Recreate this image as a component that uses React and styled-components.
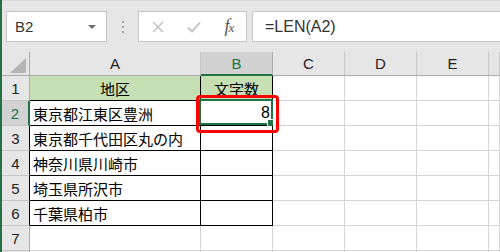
import React from 'react';
import styled, { createGlobalStyle } from 'styled-components';

const GlobalStyle = createGlobalStyle`
  html, body {
    margin: 0;
    padding: 0;
  }
  body {
    width: 500px;
    height: 252px;
    overflow: hidden;
    background: #ffffff;
    font-family: "Liberation Sans", "Noto Sans CJK JP", sans-serif;
  }
`;

const Window = styled.div`
  width: 500px;
  height: 252px;
  box-sizing: border-box;
  border-left: 2px solid #217346;
  display: flex;
  flex-direction: column;
  overflow: hidden;
  background: #ffffff;
`;

const FormulaBar = styled.div`
  flex: none;
  height: 52px;
  box-sizing: border-box;
  background: #e6e6e6;
  border-top: 1px solid #d9d9d9;
  display: flex;
  align-items: flex-start;
  padding: 10px 0 0 4px;
`;

const Box = styled.div`
  height: 31px;
  box-sizing: border-box;
  background: #ffffff;
  border: 1px solid #c6c6c6;
  display: flex;
  align-items: center;
  color: #333333;
  font-size: 15px;
`;

const NameBox = styled(Box)`
  width: 101px;
  padding: 0 8px;
  justify-content: space-between;
`;

const DropArrow = styled.span`
  width: 0;
  height: 0;
  border-left: 4px solid transparent;
  border-right: 4px solid transparent;
  border-top: 4px solid #6b6b6b;
  margin-right: 2px;
`;

const Grip = styled.div`
  width: 31px;
  height: 31px;
  display: flex;
  flex-direction: column;
  align-items: center;
  justify-content: center;
  gap: 3px;
`;

const GripDot = styled.span`
  width: 2px;
  height: 2px;
  background: #a6a6a6;
`;

const ButtonBox = styled(Box)`
  width: 109px;
  display: grid;
  grid-template-columns: 37px 36px 34px;
  justify-items: center;
`;

const FxLabel = styled.span`
  font-family: "Liberation Serif", serif;
  font-style: italic;
  font-size: 18px;
  color: #555555;
  letter-spacing: -1px;
  & small {
    font-size: 13px;
  }
`;

const FormulaInput = styled(Box)`
  flex: 1;
  margin-left: 5px;
  margin-right: -2px;
  padding-left: 12px;
  font-size: 16px;
  color: #333333;
`;

const Sheet = styled.div`
  display: grid;
  grid-template-columns: 28px 171px 72px 72px 72px 72px 1fr;
  grid-template-rows: 24px repeat(8, 25px);
`;

const Corner = styled.div`
  background: #e6e6e6;
  border-right: 1px solid #ababab;
  border-bottom: 1px solid #ababab;
`;

const ColHead = styled.div`
  box-sizing: border-box;
  background: ${p => (p.$active ? '#d2d2d2' : '#e6e6e6')};
  color: ${p => (p.$active ? '#217346' : '#222222')};
  border-right: 1px solid ${p => (p.$active ? '#ababab' : '#c6c6c6')};
  border-bottom: ${p => (p.$active ? '2px solid #217346' : '1px solid #ababab')};
  display: flex;
  align-items: center;
  justify-content: center;
  font-size: 15px;
`;

const RowHead = styled.div`
  box-sizing: border-box;
  background: ${p => (p.$active ? '#d2d2d2' : '#e6e6e6')};
  color: ${p => (p.$active ? '#217346' : '#222222')};
  border-right: ${p => (p.$active ? '2px solid #217346' : `1px solid ${p.$edge}`)};
  border-bottom: 1px solid #c6c6c6;
  display: flex;
  align-items: center;
  justify-content: center;
  font-size: 15px;
`;

const Cell = styled.div`
  box-sizing: border-box;
  position: relative;
  background: ${p => p.$fill || '#ffffff'};
  border-right: 1px solid ${p => p.$right || '#d4d4d4'};
  border-bottom: 1px solid ${p => p.$bottom || '#d4d4d4'};
  display: flex;
  align-items: center;
  justify-content: ${p => p.$align || 'flex-start'};
  padding: 0 ${p => (p.$align === 'flex-end' ? '2px' : '3px')};
  font-family: "Noto Sans CJK JP", "Liberation Sans", sans-serif;
  font-size: 15px;
  color: #000000;
  white-space: nowrap;
`;

const Value = styled.span`
  font-family: "Liberation Sans", sans-serif;
  font-size: 16px;
`;

const Selection = styled.div`
  position: absolute;
  left: -2px;
  top: -2px;
  width: 74px;
  height: 26px;
  box-sizing: border-box;
  border: 2px solid #217346;
  pointer-events: none;
`;

const FillHandle = styled.span`
  position: absolute;
  right: -4px;
  bottom: -4px;
  width: 6px;
  height: 6px;
  background: #217346;
  border: 1px solid #ffffff;
`;

const Highlight = styled.div`
  position: absolute;
  left: -5px;
  top: -6px;
  width: 83px;
  height: 38px;
  box-sizing: border-box;
  border: 3px solid #ff0000;
  border-radius: 4px;
  z-index: 2;
  pointer-events: none;
`;

const columns = ['A', 'B', 'C', 'D', 'E', ''];
const places = [
  '東京都江東区豊洲',
  '東京都千代田区丸の内',
  '神奈川県川崎市',
  '埼玉県所沢市',
  '千葉県柏市',
];

function CancelIcon() {
  return (
    <svg width="12" height="12" viewBox="0 0 12 12">
      <path d="M1 1 L11 11 M11 1 L1 11" stroke="#bdbdbd" strokeWidth="1.4" fill="none" />
    </svg>
  );
}

function EnterIcon() {
  return (
    <svg width="14" height="12" viewBox="0 0 14 12">
      <path d="M1 6.5 L5 10.5 L13 1.5" stroke="#bdbdbd" strokeWidth="1.8" fill="none" />
    </svg>
  );
}

function SheetRow({ n }) {
  const inTable = n >= 1 && n <= 6;
  const active = n === 2;
  const edge = n >= 3 && n <= 6 ? '#000000' : '#ababab';
  let a = null;
  let b = null;
  if (n === 1) {
    a = <Cell $fill="#c6e0b4" $align="center" $right="#000" $bottom="#000">地区</Cell>;
    b = <Cell $fill="#c6e0b4" $align="center" $right="#000" $bottom="#000">文字数</Cell>;
  } else if (inTable) {
    a = <Cell $right="#000" $bottom="#000">{places[n - 2]}</Cell>;
    b = (
      <Cell $right="#000" $bottom="#000" $align="flex-end">
        {active && (
          <>
            <Value>8</Value>
            <Selection>
              <FillHandle />
            </Selection>
            <Highlight />
          </>
        )}
      </Cell>
    );
  } else {
    a = <Cell />;
    b = <Cell />;
  }
  return (
    <>
      {/* row 8 only peeks in at the bottom edge, its number is out of view */}
      <RowHead $active={active} $edge={edge}>{n < 8 ? n : ''}</RowHead>
      {a}
      {b}
      <Cell />
      <Cell />
      <Cell />
      <Cell />
    </>
  );
}

export default function App() {
  return (
    <>
      <GlobalStyle />
      <Window>
        <FormulaBar>
          <NameBox>
            B2
            <DropArrow />
          </NameBox>
          <Grip>
            <GripDot />
            <GripDot />
            <GripDot />
          </Grip>
          <ButtonBox>
            <CancelIcon />
            <EnterIcon />
            <FxLabel>
              f<small>x</small>
            </FxLabel>
          </ButtonBox>
          <FormulaInput>=LEN(A2)</FormulaInput>
        </FormulaBar>
        <Sheet>
          <Corner>
            <svg width="28" height="24" style={{ display: 'block' }}>
              <polygon points="8,21 24,21 24,6" fill="#b4b4b4" />
            </svg>
          </Corner>
          {columns.map((c, i) => (
            <ColHead key={i} $active={c === 'B'}>{c}</ColHead>
          ))}
          {[1, 2, 3, 4, 5, 6, 7, 8].map(n => (
            <SheetRow key={n} n={n} />
          ))}
        </Sheet>
      </Window>
    </>
  );
}
